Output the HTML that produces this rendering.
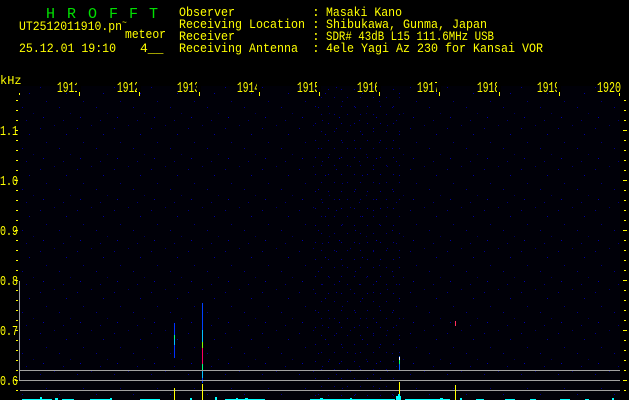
<!DOCTYPE html>
<html><head><meta charset="utf-8"><style>
html,body{margin:0;padding:0;background:#000;width:629px;height:400px;overflow:hidden}
svg{display:block}
text{font-family:"Liberation Mono",monospace}
</style></head><body>
<svg width="629" height="400" viewBox="0 0 629 400" xmlns="http://www.w3.org/2000/svg" fill="#ffff00" font-family="Liberation Mono, monospace" font-size="13">
<defs>
<pattern id="n1" width="37" height="41" patternUnits="userSpaceOnUse">
<rect x="3" y="5" width="1" height="1" fill="#000090"/><rect x="17" y="2" width="1" height="1" fill="#000070"/>
<rect x="29" y="11" width="1" height="1" fill="#0000a0"/><rect x="9" y="19" width="1" height="1" fill="#000080"/>
<rect x="22" y="25" width="1" height="1" fill="#000090"/><rect x="33" y="31" width="1" height="1" fill="#000060"/>
<rect x="6" y="35" width="1" height="1" fill="#0000b0"/><rect x="26" y="38" width="1" height="1" fill="#000080"/>
</pattern>
<pattern id="n3" width="13" height="17" patternUnits="userSpaceOnUse">
<rect x="3" y="4" width="1" height="1" fill="#000090"/><rect x="9" y="12" width="1" height="1" fill="#000080"/>
</pattern>
</defs>
<rect width="629" height="400" fill="#000"/>
<rect x="20" y="86" width="600" height="314" fill="#000008"/>
<rect x="20" y="86" width="600" height="314" fill="url(#n1)"/>
<rect x="315" y="86" width="90" height="314" fill="url(#n3)"/>

<!-- header -->
<g fill="#00e000" font-size="15">
<text x="46" y="18">H</text><text x="67" y="18">R</text><text x="88" y="18">O</text><text x="109" y="18">F</text><text x="129" y="18">F</text><text x="149" y="18">T</text>
</g>
<text x="19" y="30" textLength="103" lengthAdjust="spacingAndGlyphs">UT2512011910.pn</text>
<text x="122" y="25" font-size="8">~</text>
<text x="125" y="38" textLength="41" lengthAdjust="spacingAndGlyphs">meteor</text>
<text x="19" y="52" textLength="97" lengthAdjust="spacingAndGlyphs">25.12.01 19:10</text>
<text x="140" y="52">4__</text>
<text x="179" y="16" textLength="56" lengthAdjust="spacingAndGlyphs">Observer</text>
<text x="179" y="28" textLength="126" lengthAdjust="spacingAndGlyphs">Receiving Location</text>
<text x="179" y="40" textLength="56" lengthAdjust="spacingAndGlyphs">Receiver</text>
<text x="179" y="52" textLength="119" lengthAdjust="spacingAndGlyphs">Receiving Antenna</text>
<text x="312" y="16">:</text><text x="312" y="28">:</text><text x="312" y="40">:</text><text x="312" y="52">:</text>
<text x="326" y="16" textLength="76" lengthAdjust="spacingAndGlyphs">Masaki Kano</text>
<text x="326" y="28" textLength="161" lengthAdjust="spacingAndGlyphs">Shibukawa, Gunma, Japan</text>
<text x="326" y="40" textLength="168" lengthAdjust="spacingAndGlyphs">SDR# 43dB L15 111.6MHz USB</text>
<text x="326" y="52" textLength="217" lengthAdjust="spacingAndGlyphs">4ele Yagi Az 230 for Kansai VOR</text>

<!-- kHz -->
<text x="0" y="84" font-size="12">kHz</text>

<!-- top labels -->
<g font-size="15">
<text x="57" y="92" textLength="23" lengthAdjust="spacingAndGlyphs">1911</text>
<text x="117" y="92" textLength="23" lengthAdjust="spacingAndGlyphs">1912</text>
<text x="177" y="92" textLength="23" lengthAdjust="spacingAndGlyphs">1913</text>
<text x="237" y="92" textLength="23" lengthAdjust="spacingAndGlyphs">1914</text>
<text x="297" y="92" textLength="23" lengthAdjust="spacingAndGlyphs">1915</text>
<text x="357" y="92" textLength="23" lengthAdjust="spacingAndGlyphs">1916</text>
<text x="417" y="92" textLength="23" lengthAdjust="spacingAndGlyphs">1917</text>
<text x="477" y="92" textLength="23" lengthAdjust="spacingAndGlyphs">1918</text>
<text x="537" y="92" textLength="23" lengthAdjust="spacingAndGlyphs">1919</text>
<text x="597" y="92" textLength="24" lengthAdjust="spacingAndGlyphs">1920</text>
</g>
<g fill="#000">
<rect x="77" y="79" width="4" height="14"/><rect x="137" y="79" width="4" height="14"/>
<rect x="197" y="79" width="4" height="14"/><rect x="257" y="79" width="4" height="14"/>
<rect x="317" y="79" width="4" height="14"/><rect x="377" y="79" width="4" height="14"/>
<rect x="437" y="79" width="4" height="14"/><rect x="497" y="79" width="4" height="14"/>
<rect x="557" y="79" width="4" height="14"/>
</g>
<g fill="#ff0">
<rect x="19" y="93" width="1" height="2"/><rect x="79" y="92" width="1" height="4"/><rect x="139" y="92" width="1" height="4"/>
<rect x="199" y="92" width="1" height="4"/><rect x="259" y="92" width="1" height="4"/><rect x="319" y="92" width="1" height="4"/>
<rect x="379" y="92" width="1" height="4"/><rect x="439" y="92" width="1" height="4"/><rect x="499" y="92" width="1" height="4"/>
<rect x="559" y="92" width="1" height="4"/><rect x="619" y="93" width="1" height="3"/>
</g>

<!-- left labels -->
<g font-size="14">
<text x="0" y="135" textLength="18" lengthAdjust="spacingAndGlyphs">1.1</text><text x="0" y="185" textLength="18" lengthAdjust="spacingAndGlyphs">1.0</text><text x="0" y="235" textLength="18" lengthAdjust="spacingAndGlyphs">0.9</text>
<text x="0" y="285" textLength="18" lengthAdjust="spacingAndGlyphs">0.8</text><text x="0" y="335" textLength="18" lengthAdjust="spacingAndGlyphs">0.7</text><text x="0" y="385" textLength="18" lengthAdjust="spacingAndGlyphs">0.6</text>
</g>
<g fill="#ff0">
<rect x="16" y="100" width="2" height="1"/><rect x="16" y="110" width="2" height="1"/><rect x="16" y="120" width="2" height="1"/>
<rect x="15" y="130" width="3" height="1"/><rect x="16" y="140" width="2" height="1"/><rect x="16" y="150" width="2" height="1"/>
<rect x="16" y="160" width="2" height="1"/><rect x="16" y="170" width="2" height="1"/><rect x="15" y="180" width="3" height="1"/>
<rect x="16" y="190" width="2" height="1"/><rect x="16" y="200" width="2" height="1"/><rect x="16" y="210" width="2" height="1"/>
<rect x="16" y="220" width="2" height="1"/><rect x="15" y="230" width="3" height="1"/><rect x="16" y="240" width="2" height="1"/>
<rect x="16" y="250" width="2" height="1"/><rect x="16" y="260" width="2" height="1"/><rect x="16" y="270" width="2" height="1"/>
<rect x="15" y="280" width="3" height="1"/><rect x="16" y="290" width="2" height="1"/><rect x="16" y="300" width="2" height="1"/>
<rect x="16" y="310" width="2" height="1"/><rect x="16" y="320" width="2" height="1"/><rect x="15" y="330" width="3" height="1"/>
<rect x="16" y="340" width="2" height="1"/><rect x="16" y="350" width="2" height="1"/><rect x="16" y="360" width="2" height="1"/>
<rect x="16" y="370" width="2" height="1"/><rect x="15" y="380" width="3" height="1"/><rect x="16" y="390" width="2" height="1"/>
</g>
<g fill="#ff0">
<rect x="624" y="100" width="2" height="1"/><rect x="624" y="110" width="2" height="1"/><rect x="624" y="120" width="2" height="1"/>
<rect x="623" y="130" width="4" height="1"/><rect x="624" y="140" width="2" height="1"/><rect x="624" y="150" width="2" height="1"/>
<rect x="624" y="160" width="2" height="1"/><rect x="624" y="170" width="2" height="1"/><rect x="623" y="180" width="4" height="1"/>
<rect x="624" y="190" width="2" height="1"/><rect x="624" y="200" width="2" height="1"/><rect x="624" y="210" width="2" height="1"/>
<rect x="624" y="220" width="2" height="1"/><rect x="623" y="230" width="4" height="1"/><rect x="624" y="240" width="2" height="1"/>
<rect x="624" y="250" width="2" height="1"/><rect x="624" y="260" width="2" height="1"/><rect x="624" y="270" width="2" height="1"/>
<rect x="623" y="280" width="4" height="1"/><rect x="624" y="290" width="2" height="1"/><rect x="624" y="300" width="2" height="1"/>
<rect x="624" y="310" width="2" height="1"/><rect x="624" y="320" width="2" height="1"/><rect x="623" y="330" width="4" height="1"/>
<rect x="624" y="340" width="2" height="1"/><rect x="624" y="350" width="2" height="1"/><rect x="624" y="360" width="2" height="1"/>
<rect x="624" y="370" width="2" height="1"/><rect x="623" y="380" width="4" height="1"/><rect x="624" y="390" width="2" height="1"/>
</g>

<rect x="19" y="281" width="1" height="100" fill="#a0a0a0"/>

<!-- signals -->
<rect x="174" y="323" width="1" height="35" fill="#0030ff"/>
<rect x="174" y="335" width="1" height="4" fill="#00ff80"/>
<rect x="174" y="339" width="1" height="6" fill="#00c0ff"/>
<rect x="202" y="303" width="1" height="80" fill="#0040ff"/>
<rect x="202" y="330" width="1" height="12" fill="#00c0ff"/>
<rect x="202" y="342" width="1" height="6" fill="#80ff00"/>
<rect x="202" y="348" width="1" height="16" fill="#ff0060"/>
<rect x="202" y="364" width="1" height="6" fill="#00ff80"/>
<rect x="202" y="370" width="1" height="8" fill="#00c0ff"/>
<rect x="399" y="356" width="1" height="14" fill="#0060ff"/>
<rect x="399" y="357" width="1" height="3" fill="#ffffff"/>
<rect x="399" y="360" width="1" height="4" fill="#00ff60"/>
<rect x="455" y="321" width="1" height="5" fill="#ff3060"/>

<rect x="20" y="370" width="600" height="1" fill="#a0a0a0"/>
<rect x="20" y="380" width="600" height="1" fill="#a0a0a0"/>
<rect x="20" y="390" width="600" height="1" fill="#a0a0a0"/>

<rect x="174" y="388" width="1" height="12" fill="#ff0"/>
<rect x="202" y="384" width="1" height="16" fill="#ff0"/>
<rect x="399" y="382" width="1" height="18" fill="#ff0"/>
<rect x="455" y="385" width="1" height="15" fill="#ff0"/>

<g fill="#00ffff">
<rect x="22" y="399" width="30" height="1"/><rect x="40" y="397" width="2" height="3"/><rect x="55" y="398" width="3" height="2"/><rect x="62" y="399" width="12" height="1"/>
<rect x="90" y="399" width="20" height="1"/><rect x="110" y="398" width="2" height="2"/>
<rect x="140" y="399" width="20" height="1"/><rect x="190" y="398" width="2" height="2"/><rect x="215" y="397" width="2" height="3"/>
<rect x="225" y="399" width="40" height="1"/><rect x="236" y="398" width="2" height="2"/><rect x="245" y="398" width="3" height="2"/>
<rect x="310" y="399" width="85" height="1"/><rect x="320" y="398" width="3" height="2"/><rect x="350" y="398" width="2" height="2"/>
<rect x="396" y="396" width="5" height="4"/><rect x="398" y="394" width="2" height="6"/>
<rect x="405" y="399" width="45" height="1"/><rect x="440" y="398" width="3" height="2"/><rect x="460" y="398" width="2" height="2"/>
<rect x="476" y="399" width="8" height="1"/><rect x="505" y="399" width="10" height="1"/><rect x="530" y="399" width="6" height="1"/>
<rect x="560" y="399" width="10" height="1"/><rect x="585" y="399" width="4" height="1"/><rect x="612" y="398" width="2" height="2"/>
</g>
</svg>
</body></html>
